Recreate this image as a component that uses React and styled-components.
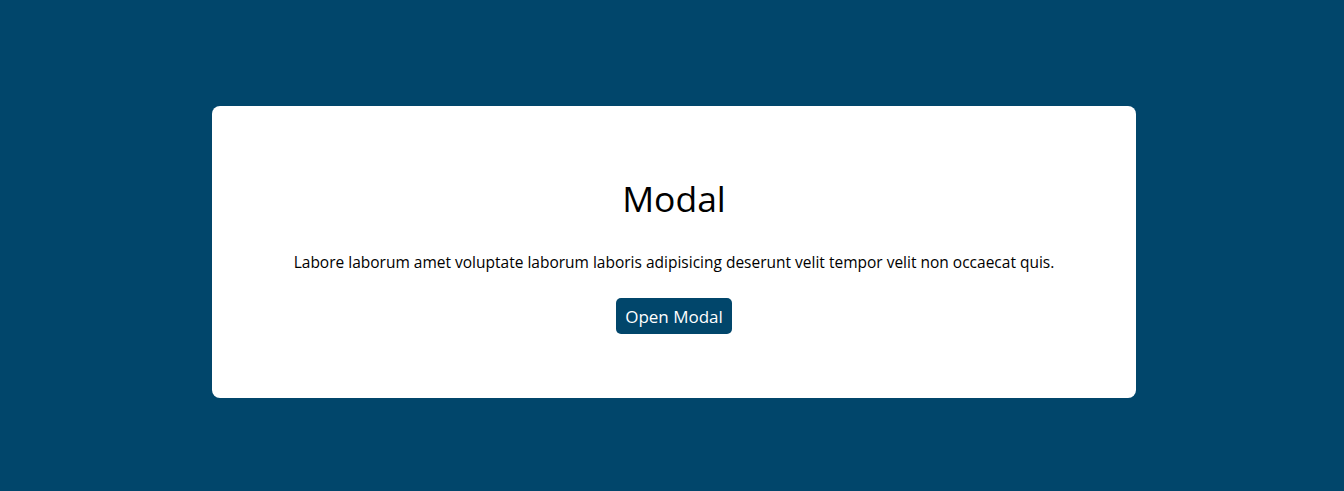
import React from "react";
import styled, { createGlobalStyle } from "styled-components";

const Global = createGlobalStyle`
  html, body { margin: 0; padding: 0; background: #01466b; }
  body { font-family: "Open Sans", "Noto Sans", sans-serif; }
`;

const Page = styled.div`
  min-height: 491px;
  box-sizing: border-box;
  display: flex;
  justify-content: center;
  align-items: flex-start;
  padding: 106px 0 0 4px;
`;

const Card = styled.div`
  width: 924px;
  height: 292px;
  box-sizing: border-box;
  background: #ffffff;
  border-radius: 8px;
  display: flex;
  flex-direction: column;
  align-items: center;
  padding-top: 70px;
`;

const Title = styled.h1`
  margin: 0;
  font-size: 35.5px;
  font-weight: 400;
  line-height: 44px;
  color: #000;
`;

const Text = styled.p`
  margin: 30px 0 0;
  font-size: 15.5px;
  line-height: 24px;
  color: #000;
`;

const Button = styled.button`
  margin-top: 24px;
  height: 36px;
  padding: 0 9px;
  background: #01466b;
  color: #fff;
  border: none;
  border-radius: 5px;
  font-family: inherit;
  font-size: 17px;
  cursor: pointer;
`;

export default function App() {
  return (
    <>
      <Global />
      <Page>
        <Card>
          <Title>Modal</Title>
          <Text>
            Labore laborum amet voluptate laborum laboris adipisicing deserunt velit tempor velit non occaecat quis.
          </Text>
          <Button>Open Modal</Button>
        </Card>
      </Page>
    </>
  );
}
